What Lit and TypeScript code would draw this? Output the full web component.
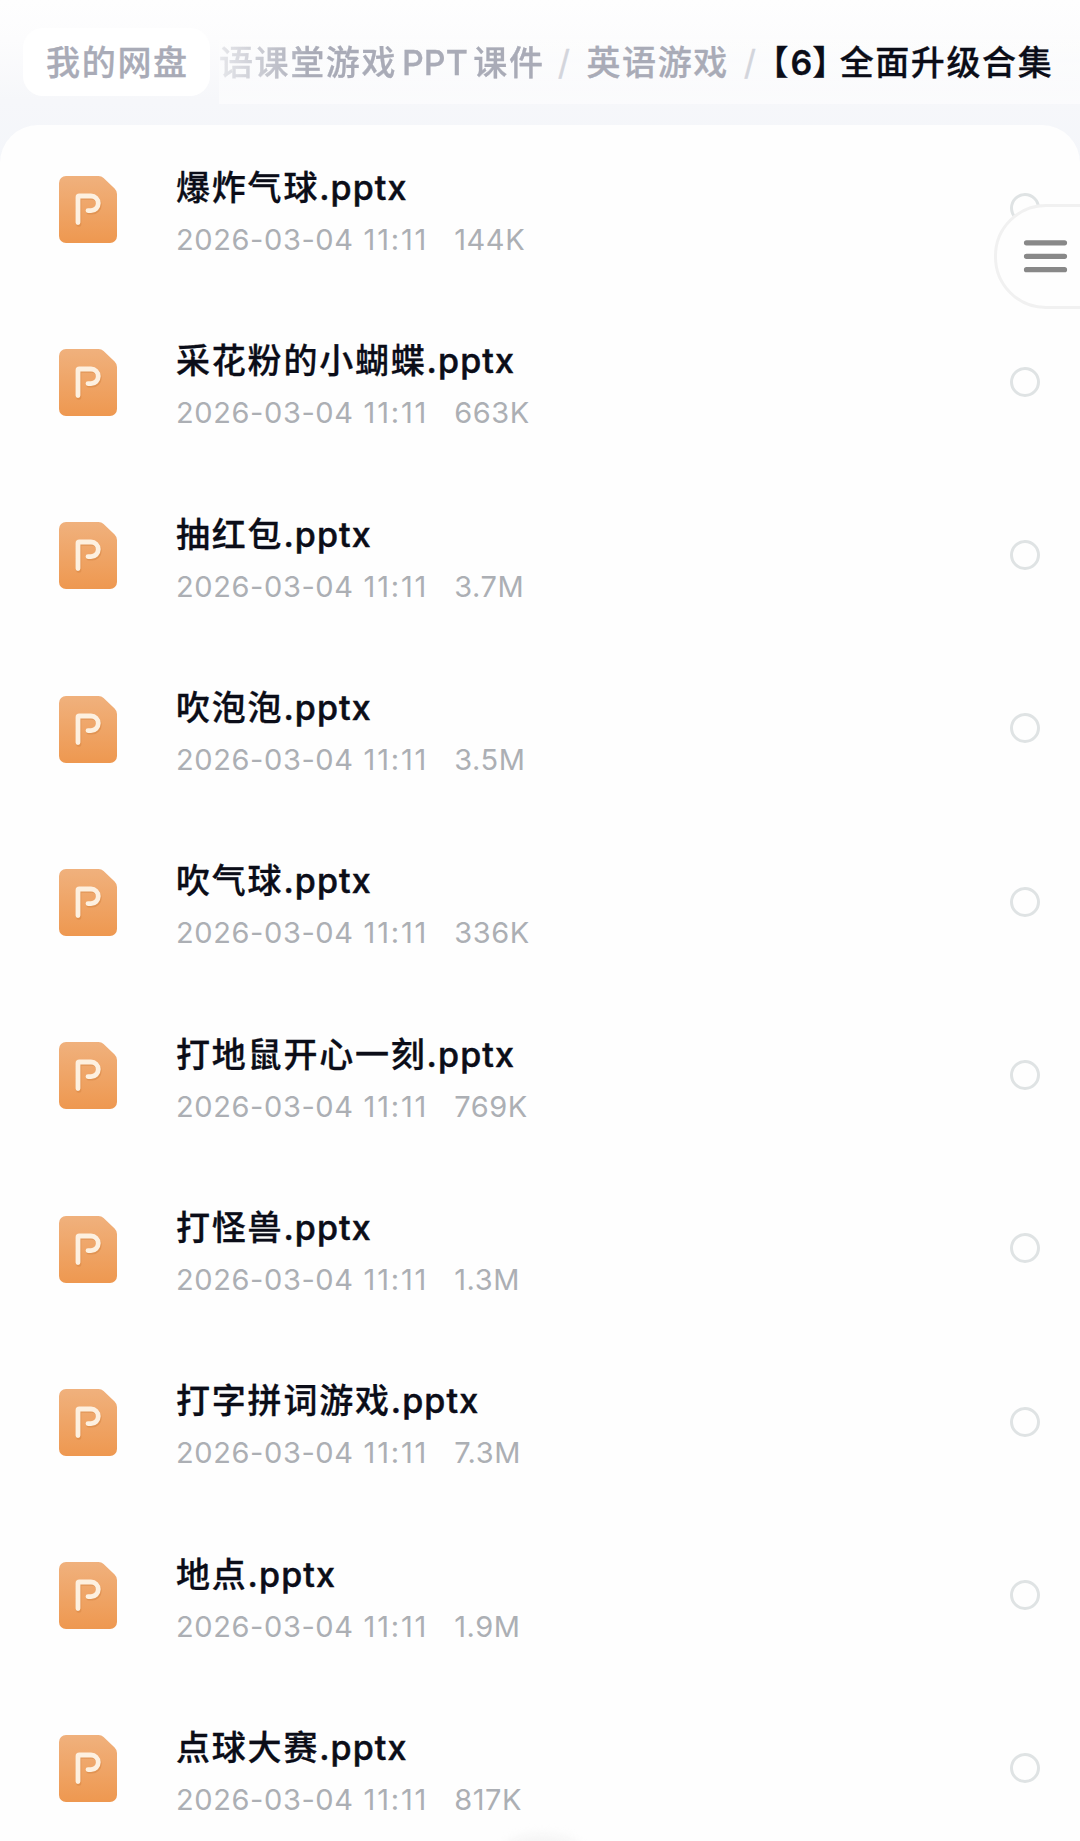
import { LitElement, html, css, svg } from "lit";
import { customElement, property } from "lit/decorators.js";

interface FileItem {
  name: string;
  date: string;
  time: string;
  size: string;
}

const FILES: FileItem[] = [
  { name: "爆炸气球", date: "2026-03-04", time: "11:11", size: "144K" },
  { name: "采花粉的小蝴蝶", date: "2026-03-04", time: "11:11", size: "663K" },
  { name: "抽红包", date: "2026-03-04", time: "11:11", size: "3.7M" },
  { name: "吹泡泡", date: "2026-03-04", time: "11:11", size: "3.5M" },
  { name: "吹气球", date: "2026-03-04", time: "11:11", size: "336K" },
  { name: "打地鼠开心一刻", date: "2026-03-04", time: "11:11", size: "769K" },
  { name: "打怪兽", date: "2026-03-04", time: "11:11", size: "1.3M" },
  { name: "打字拼词游戏", date: "2026-03-04", time: "11:11", size: "7.3M" },
  { name: "地点", date: "2026-03-04", time: "11:11", size: "1.9M" },
  { name: "点球大赛", date: "2026-03-04", time: "11:11", size: "817K" },
];

const pptIcon = svg`
  <defs>
    <linearGradient id="sheet" x1="0" y1="0" x2="0" y2="1">
      <stop offset="0" stop-color="#f0b17d" />
      <stop offset="1" stop-color="#ee9850" />
    </linearGradient>
  </defs>
  <path fill="url(#sheet)" d="M7 0H39.5Q42.5 0 44.6 2.1L55.6 12.6Q58 15 58 18V60A7 7 0 0 1 51 67H7A7 7 0 0 1 0 60V7A7 7 0 0 1 7 0Z" />
  <path d="M19 47V21.3Q19 20 20.3 20H32A7.3 7.3 0 0 1 32 34.8H29" transform="translate(0.8 1.3)" fill="none" stroke="#d0803f" stroke-opacity=".45" stroke-width="5" stroke-linecap="round" />
  <path d="M19 46.6V21.3Q19 20 20.3 20H32A7.3 7.3 0 0 1 32 34.6H29" fill="none" stroke="#fdf0e0" stroke-width="4.8" stroke-linecap="round" />
`;

@customElement("file-row")
export class FileRow extends LitElement {
  @property({ attribute: false }) file!: FileItem;

  static styles = css`
    :host {
      display: flex;
      align-items: flex-start;
      box-sizing: border-box;
      height: 173.3px;
      padding: 38.2px 40px 0 59px;
    }
    .icon {
      flex: none;
      width: 58px;
      height: 67px;
      margin-top: 12.6px;
    }
    .text {
      flex: 1;
      margin-left: 59px;
    }
    .name {
      display: flex;
      align-items: baseline;
      height: 50px;
      line-height: 50px;
      font-size: 34px;
      font-weight: 500;
      color: #0b0d18;
      white-space: nowrap;
    }
    .base {
      letter-spacing: 1.8px;
      -webkit-text-stroke: 0.3px currentColor;
    }
    .ext {
      letter-spacing: 1.1px;
      -webkit-text-stroke: 0.5px currentColor;
    }
    .meta {
      display: flex;
      margin-top: 9px;
      height: 36px;
      line-height: 36px;
      font-size: 29px;
      color: #acafb4;
      letter-spacing: 0.6px;
      white-space: pre;
    }
    .time {
      margin-left: 10px;
      letter-spacing: 1.8px;
    }
    .size {
      margin-left: 26px;
    }
    .radio {
      flex: none;
      box-sizing: border-box;
      width: 30px;
      height: 30px;
      margin-top: 30.3px;
      border: 3px solid #dfe3e4;
      border-radius: 50%;
    }
  `;

  render() {
    return html`
      <svg class="icon" viewBox="0 0 58 67">${pptIcon}</svg>
      <div class="text">
        <div class="name"><span class="base">${this.file.name}</span><span class="ext">.pptx</span></div>
        <div class="meta"><span>${this.file.date}</span><span class="time">${this.file.time}</span><span class="size">${this.file.size}</span></div>
      </div>
      <span class="radio"></span>
    `;
  }
}

@customElement("app-root")
export class AppRoot extends LitElement {
  static styles = css`
    :host {
      display: block;
      position: relative;
      width: 1080px;
      height: 1841px;
      overflow: hidden;
      background: linear-gradient(#fefefe 0, #fcfcfd 40px, #f6f7fa 100px, #f4f6fa 160px);
      font-family: Inter, "Noto Sans CJK SC", sans-serif;
    }
    .crumbs {
      display: flex;
      align-items: flex-start;
      height: 125px;
      box-sizing: border-box;
      padding: 28px 0 0 23px;
      font-size: 34px;
      font-weight: 500;
      line-height: 70px;
      color: #a9abb7;
      white-space: nowrap;
      -webkit-text-stroke: 0.3px currentColor;
    }
    .home {
      flex: none;
      box-sizing: border-box;
      width: 187px;
      height: 68px;
      padding-left: 23px;
      border-radius: 20px;
      background: #fff;
      letter-spacing: 1.7px;
    }
    .trail {
      flex: 1;
      display: flex;
      height: 76px;
      margin-left: 9px;
      background: linear-gradient(rgba(255, 255, 255, 0.1), rgba(255, 255, 255, 0.55));
      letter-spacing: 1.6px;
    }
    .course {
      display: flex;
      width: 324px;
      -webkit-mask-image: linear-gradient(90deg, rgba(0, 0, 0, 0.25), #000 90px);
      mask-image: linear-gradient(90deg, rgba(0, 0, 0, 0.25), #000 90px);
    }
    .latin {
      margin: 0 5.5px 0 5px;
      letter-spacing: 0;
    }
    .slash {
      width: 42px;
      text-align: center;
      color: #d3d5dc;
      font-weight: 400;
      letter-spacing: 0;
    }
    .subject {
      margin-left: 1.5px;
    }
    .current {
      display: flex;
      margin-left: 0.5px;
      color: #0b0d18;
    }
    .bracket {
      font-feature-settings: "halt";
      letter-spacing: 0;
    }
    .digit {
      margin-left: 2px;
      font-weight: 600;
      letter-spacing: 0;
    }
    .title {
      margin-left: 10.5px;
    }
    .sheet {
      height: 1716px;
      border-radius: 38px 38px 0 0;
      background: #fefefe;
    }
    .drawer {
      position: absolute;
      left: 994px;
      top: 204px;
      box-sizing: border-box;
      width: 100px;
      height: 105px;
      border: 3px solid #f1f1f1;
      border-radius: 52px 0 0 52px;
      background: #fefefe;
    }
    .bars {
      display: block;
      width: 46px;
      height: 34px;
      margin: 32px 0 0 25px;
    }
    .glow {
      position: absolute;
      left: 504px;
      top: 1834px;
      width: 76px;
      height: 30px;
      border-radius: 50%;
      background: #f5f5f5;
      filter: blur(5px);
    }
  `;

  render() {
    return html`
      <nav class="crumbs">
        <span class="home">我的网盘</span>
        <div class="trail">
          <span class="course"><span>语课堂游戏</span><span class="latin">PPT</span><span>课件</span></span>
          <span class="slash">/</span>
          <span class="subject">英语游戏</span>
          <span class="slash">/</span>
          <span class="current"><span class="bracket">【</span><span class="digit">6</span><span class="bracket">】</span><span class="title">全面升级合集</span></span>
        </div>
      </nav>
      <main class="sheet">
        ${FILES.map((file) => html`<file-row .file=${file}></file-row>`)}
      </main>
      <div class="drawer">
        <svg class="bars" viewBox="0 0 46 34" stroke="#888" stroke-width="5.2" stroke-linecap="round">
          <path d="M4.5 3.8H42.5M4.5 17.3H42.5M4.5 30.7H42.5" />
        </svg>
      </div>
      <div class="glow"></div>
    `;
  }
}
